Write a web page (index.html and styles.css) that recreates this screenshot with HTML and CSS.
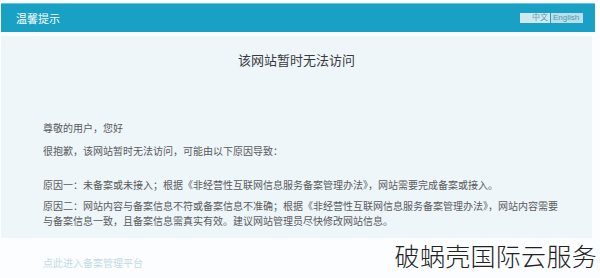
FILE: index.html
```html
<!DOCTYPE html>
<html lang="zh-CN">
<head>
  <meta charset="UTF-8" />
  <meta name="viewport" content="width=device-width, initial-scale=1.0"/>
  <title>温馨提示</title>
  <link rel="stylesheet" href="styles.css">
</head>
<body>
  <div class="topbar">
    <span class="topbar-title">温馨提示</span>
    <div class="lang">
      <a class="lang-btn lang-cn">中文</a>
      <a class="lang-btn lang-en">English</a>
    </div>
  </div>

  <div class="panel">
    <h2>该网站暂时无法访问</h2>
    <div class="msg">
      <p class="hello">尊敬的用户，您好</p>
      <p class="sorry">很抱歉，该网站暂时无法访问，可能由以下原因导致：</p>
      <p class="reason1">原因一：未备案或未接入；根据《非经营性互联网信息服务备案管理办法》，网站需要完成备案或接入。</p>
      <p class="reason2">原因二：网站内容与备案信息不符或备案信息不准确；根据《非经营性互联网信息服务备案管理办法》，网站内容需要与备案信息一致，且备案信息需真实有效。建议网站管理员尽快修改网站信息。</p>
    </div>
  </div>

  <div class="footer">
    <a class="link">点此进入备案管理平台</a>
  </div>

  <div class="watermark">破蜗壳国际云服务</div>
</body>
</html>
```

FILE: styles.css
```css
body {
  margin: 0;
  background-color: #fbfdfe;
  font-family: 'Noto Sans CJK SC', 'Noto Sans', sans-serif;
  height: 278px;
  position: relative;
  overflow: hidden;
}

.topbar {
  margin: 3px 5px 0 1px;
  height: 29px;
  box-sizing: border-box;
  background-color: #18a1c4;
  border-top: 1px solid #62c9e2;
  display: flex;
  align-items: center;
  justify-content: space-between;
  padding: 0 12px 0 15px;
}

.topbar-title {
  color: #ffffff;
  font-size: 11px;
  line-height: 14px;
}

.lang {
  display: flex;
  gap: 1px;
}

.lang-btn {
  font-size: 8px;
  line-height: 10px;
  height: 10px;
  padding: 0 2px;
  font-family: 'Liberation Sans', 'Noto Sans CJK SC', sans-serif;
}

.lang-cn {
  width: 26px;
  text-align: right;
  background-color: #cfe9f1;
  color: #5f9fb3;
}

.lang-en {
  width: 28px;
  background-color: #b9dfe9;
  color: #4e9cb1;
}

.panel {
  margin: 4px 8px 0 1px;
  height: 202px;
  background-color: #eef6fa;
  padding-top: 15px;
  box-sizing: border-box;
}

h2 {
  margin: 0;
  text-align: center;
  font-size: 13px;
  line-height: 18px;
  font-weight: normal;
  color: #3a3a3a;
}

.msg {
  padding-left: 42px;
  font-size: 10px;
  line-height: 15px;
  color: #5a5a5a;
}

.msg p {
  margin: 0;
  max-width: 519px;
}

.hello {
  padding-top: 51px;
}

.sorry {
  padding-top: 8px;
}

.reason1 {
  padding-top: 19px;
}

.reason2 {
  padding-top: 6px;
}

.footer {
  padding: 10px 0 0 43px;
}

.link {
  font-size: 10px;
  line-height: 15px;
  color: #c3dae6;
}

.watermark {
  position: absolute;
  right: 3px;
  top: 239px;
  font-size: 25px;
  line-height: 32px;
  font-weight: 300;
  color: #222;
  letter-spacing: 0.3px;
}
```
